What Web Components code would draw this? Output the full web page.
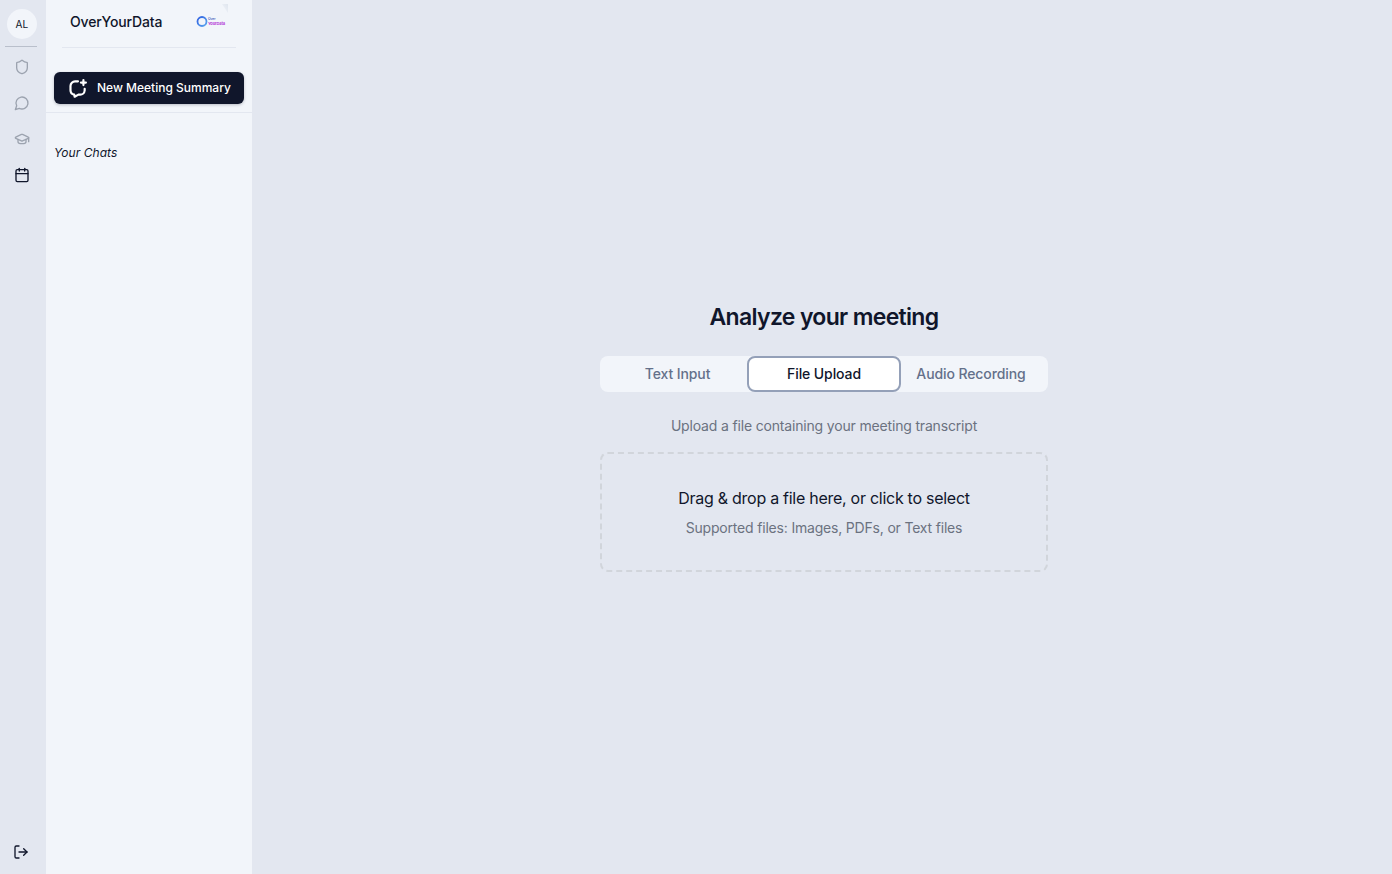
<!DOCTYPE html>
<html lang="en">
<head>
<meta charset="utf-8">
<title>Analyze your meeting</title>
<style>
    html, body{
        margin: 0;
        height: 100%;
        background: #e3e7f0;
        font-family: Inter, "Liberation Sans", sans-serif;
        color: #10162b;
    }
</style>
</head>
<body>
<app-shell>
    <icon-rail></icon-rail>
    <chat-sidebar></chat-sidebar>
    <meeting-panel></meeting-panel>
</app-shell>

<script>
class AppShell extends HTMLElement{
    constructor(){
        super();
        const shadow = this.attachShadow({ mode: 'open' });
        shadow.innerHTML = `
        <style>
        :host{
            display: flex;
            height: 100vh;
            overflow: hidden;
        }
        </style>
        <slot></slot>
        `
    }
}

const line = 'fill="none" stroke="currentColor" stroke-width="2" stroke-linecap="round" stroke-linejoin="round"';

class IconRail extends HTMLElement{
    constructor(){
        super();
        const shadow = this.attachShadow({ mode: 'open' });
        shadow.innerHTML = `
        <style>
        :host{
            display: flex;
            flex-direction: column;
            align-items: center;
            width: 46px;
            flex: none;
            box-sizing: border-box;
            padding: 9px 0 14px;
            background: #e3e7f0;
        }
        .avatar{
            width: 30px;
            height: 30px;
            margin-left: -2px;
            border-radius: 50%;
            background: #f2f5fa;
            display: flex;
            justify-content: center;
            align-items: center;
            font-size: 10px;
            line-height: 1;
            letter-spacing: 0.2px;
            color: #10162b;
        }
        hr{
            width: 32px;
            margin: 7px 0 0 -4px;
            border: 0;
            border-top: 1px solid #b9bfcb;
        }
        nav{
            display: flex;
            flex-direction: column;
            gap: 20px;
            margin-top: 12px;
            margin-left: -2px;
            flex: 1;
        }
        svg{
            display: block;
            width: 16px;
            height: 16px;
        }
        nav svg{
            color: #9ca3af;
        }
        nav svg.active{
            color: #10162b;
        }
        .logout{
            margin-left: -5px;
            color: #10162b;
        }
        </style>
        <div class="avatar">AL</div>
        <hr>
        <nav>
            <svg viewBox="0 0 24 24" ${line}><path d="M20 13c0 5-3.5 7.5-7.66 8.95a1 1 0 0 1-.67-.01C7.5 20.5 4 18 4 13V6a1 1 0 0 1 1-1c2 0 4.5-1.2 6.24-2.72a1.17 1.17 0 0 1 1.52 0C14.51 3.81 17 5 19 5a1 1 0 0 1 1 1z"/></svg>
            <svg viewBox="0 0 24 24" ${line}><path d="M7.9 20A9 9 0 1 0 4 16.1L2 22Z"/></svg>
            <svg viewBox="0 0 24 24" ${line}><path d="M21.42 10.922a1 1 0 0 0-.019-1.838L12.83 5.18a2 2 0 0 0-1.66 0L2.6 9.08a1 1 0 0 0 0 1.832l8.57 3.908a2 2 0 0 0 1.66 0z"/><path d="M22 10v6"/><path d="M6 12.5V16a6 3 0 0 0 12 0v-3.5"/></svg>
            <svg class="active" viewBox="0 0 24 24" ${line}><path d="M8 2v4"/><path d="M16 2v4"/><rect x="3" y="4" width="18" height="18" rx="2"/><path d="M3 10h18"/></svg>
        </nav>
        <svg class="logout" viewBox="0 0 24 24" ${line}><path d="M9 21H5a2 2 0 0 1-2-2V5a2 2 0 0 1 2-2h4"/><path d="m16 17 5-5-5-5"/><path d="M21 12H9"/></svg>
        `
    }
}

class ChatSidebar extends HTMLElement{
    constructor(){
        super();
        const shadow = this.attachShadow({ mode: 'open' });
        shadow.innerHTML = `
        <style>
        :host{
            display: block;
            width: 206px;
            flex: none;
            background: #f2f5fa;
        }
        .brand{
            display: flex;
            justify-content: space-between;
            align-items: center;
            height: 48px;
            margin: 0 16px;
            padding: 0 8px;
            box-sizing: border-box;
            border-bottom: 1px solid #e3e7f0;
            font-size: 14px;
            font-weight: 500;
            letter-spacing: -0.15px;
        }
        .brand span{
            margin-bottom: 4px;
        }
        .brand svg{
            display: block;
            margin: -13px 0 0 0;
        }
        .action{
            padding: 24px 8px 8px;
            border-bottom: 1px solid #e3e7f0;
        }
        button{
            width: 100%;
            height: 32px;
            display: flex;
            align-items: center;
            gap: 9px;
            padding: 0 14px 1px;
            border: 0;
            border-radius: 6px;
            background: #10162b;
            color: #fff;
            font: 500 12px Inter, "Liberation Sans", sans-serif;
            box-shadow: 0 1px 3px rgba(15,23,42,0.25);
            white-space: nowrap;
        }
        button svg{
            width: 20px;
            height: 20px;
            flex: none;
        }
        h3{
            margin: 32px 8px 0;
            font-size: 12px;
            line-height: 16px;
            font-weight: 400;
            font-style: italic;
            letter-spacing: 0.05px;
        }
        </style>
        <div class="brand">
            <span>OverYourData</span>
            <svg width="32" height="26" viewBox="0 0 32 26">
                <defs>
                    <linearGradient id="ring" x1="0" y1="0" x2="1" y2="1"><stop offset="0" stop-color="#2f5fe0"/><stop offset="1" stop-color="#5aa6ee"/></linearGradient>
                    <linearGradient id="fold" x1="1" y1="0" x2="0" y2="1"><stop offset="0" stop-color="#dfe5ee"/><stop offset="1" stop-color="#f2f5fa"/></linearGradient>
                </defs>
                <path d="M26 0h6v9z" fill="url(#fold)"/>
                <circle cx="6" cy="17.5" r="4.5" fill="none" stroke="url(#ring)" stroke-width="1.8"/>
                <text x="12" y="16" font-size="3.500" font-weight="500" font-family="Inter" fill="#3450b8">Over</text>
                <text x="12" y="21" font-size="4" font-weight="700" font-family="Inter" fill="#b43bd6">YourData</text>
            </svg>
        </div>
        <div class="action">
            <button>
                <svg viewBox="0 0 24 24" fill="none" stroke="currentColor" stroke-width="2.6" stroke-linecap="round" stroke-linejoin="round">
                    <path d="M12 4H8.500A5.500 5.500 0 0 0 3 9.500v5A5.500 5.500 0 0 0 7.500 20l.5 2.500 4.500-2.500h2A5.500 5.500 0 0 0 20 15v-2"/>
                    <path d="M18.500 2.500v6"/><path d="M15.500 5.500h6"/>
                </svg>
                New Meeting Summary
            </button>
        </div>
        <h3>Your Chats</h3>
        `
    }
}

class SegmentTabs extends HTMLElement{
    constructor(){
        super();
        const shadow = this.attachShadow({ mode: 'open' });
        shadow.innerHTML = `
        <style>
        :host{
            display: grid;
            grid-template-columns: 147px 154px 147px;
            height: 36px;
            border-radius: 8px;
            background: #f2f5fa;
        }
        div{
            display: flex;
            justify-content: center;
            align-items: center;
            border-radius: 8px;
            box-sizing: border-box;
            padding-bottom: 1px;
            font-size: 14px;
            font-weight: 500;
            letter-spacing: -0.1px;
            color: #64708a;
        }
        .first{
            padding-left: 8px;
        }
        .last{
            padding-right: 7px;
        }
        .on{
            background: #fff;
            color: #10162b;
            border: 2px solid #94a0b8;
        }
        </style>
        <div class="first">Text Input</div>
        <div class="on">File Upload</div>
        <div class="last">Audio Recording</div>
        `
    }
}

class DropZone extends HTMLElement{
    constructor(){
        super();
        const shadow = this.attachShadow({ mode: 'open' });
        shadow.innerHTML = `
        <style>
        :host{
            display: flex;
            flex-direction: column;
            justify-content: center;
            align-items: center;
            gap: 8px;
            height: 120px;
            box-sizing: border-box;
            border: 2px dashed #d1d5db;
            border-radius: 8px;
        }
        p{
            margin: 0;
        }
        .main{
            font-size: 16px;
            line-height: 24px;
            letter-spacing: -0.27px;
            color: #10162b;
        }
        .sub{
            font-size: 14px;
            line-height: 20px;
            letter-spacing: -0.19px;
            color: #6b7280;
        }
        </style>
        <p class="main">Drag &amp; drop a file here, or click to select</p>
        <p class="sub">Supported files: Images, PDFs, or Text files</p>
        `
    }
}

class MeetingPanel extends HTMLElement{
    constructor(){
        super();
        const shadow = this.attachShadow({ mode: 'open' });
        shadow.innerHTML = `
        <style>
        :host{
            flex: 1;
            display: flex;
            justify-content: center;
            align-items: center;
            padding-left: 4px;
        }
        .wrap{
            width: 448px;
        }
        h1{
            margin: 0 0 24px;
            text-align: center;
            font-size: 23px;
            line-height: 30px;
            font-weight: 600;
            letter-spacing: -0.67px;
            color: #10162b;
        }
        p{
            margin: 24px 0 16px;
            text-align: center;
            font-size: 14px;
            line-height: 20px;
            letter-spacing: -0.17px;
            color: #6b7280;
        }
        </style>
        <div class="wrap">
            <h1>Analyze your meeting</h1>
            <segment-tabs></segment-tabs>
            <p>Upload a file containing your meeting transcript</p>
            <drop-zone></drop-zone>
        </div>
        `
    }
}

customElements.define("app-shell", AppShell);
customElements.define("icon-rail", IconRail);
customElements.define("chat-sidebar", ChatSidebar);
customElements.define("segment-tabs", SegmentTabs);
customElements.define("drop-zone", DropZone);
customElements.define("meeting-panel", MeetingPanel);
</script>
</body>
</html>
